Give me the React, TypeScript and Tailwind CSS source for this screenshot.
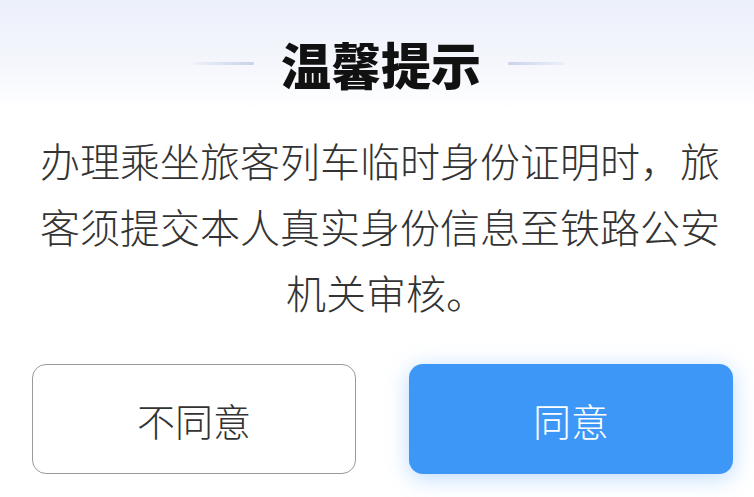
export default function App() {
	const font = { fontFamily: '"Noto Sans CJK SC", "Noto Sans", sans-serif' };

	return (
		<div
			className="w-[754px] h-[497px] bg-[linear-gradient(180deg,#ecf0fb_0px,#f4f6fc_60px,#ffffff_110px)] overflow-hidden"
			style={font}
		>
			<div className="flex items-center justify-center pt-[38px] pl-[4px]">
				<div className="w-[61px] h-[3px] rounded-full bg-[linear-gradient(90deg,rgba(205,214,236,0.2),#c8d3ec)]" />
				<h1 className="mx-[27px] text-[50px] leading-[50px] font-black text-[#111]">
					温馨提示
				</h1>
				<div className="w-[57px] h-[3px] rounded-full bg-[linear-gradient(90deg,#c8d3ec,rgba(205,214,236,0.2))]" />
			</div>

			<div className="mt-[39px] pl-[6px] text-center text-[40px] leading-[66px] font-light text-[#333] whitespace-nowrap">
				<p>办理乘坐旅客列车临时身份证明时，旅</p>
				<p>客须提交本人真实身份信息至铁路公安</p>
				<p className="pl-[12px]">机关审核。</p>
			</div>

			<div className="flex gap-[53px] pl-[32px] mt-[39px]">
				<button className="w-[324px] h-[110px] rounded-[14px] border border-[#9a9a9a] bg-white text-[38px] font-light text-[#333]">
					不同意
				</button>
				<button className="w-[324px] h-[110px] rounded-[14px] bg-[#3d97f6] text-[38px] font-light text-white shadow-[0_4px_22px_rgba(61,151,246,0.35)]">
					同意
				</button>
			</div>
		</div>
	);
}
